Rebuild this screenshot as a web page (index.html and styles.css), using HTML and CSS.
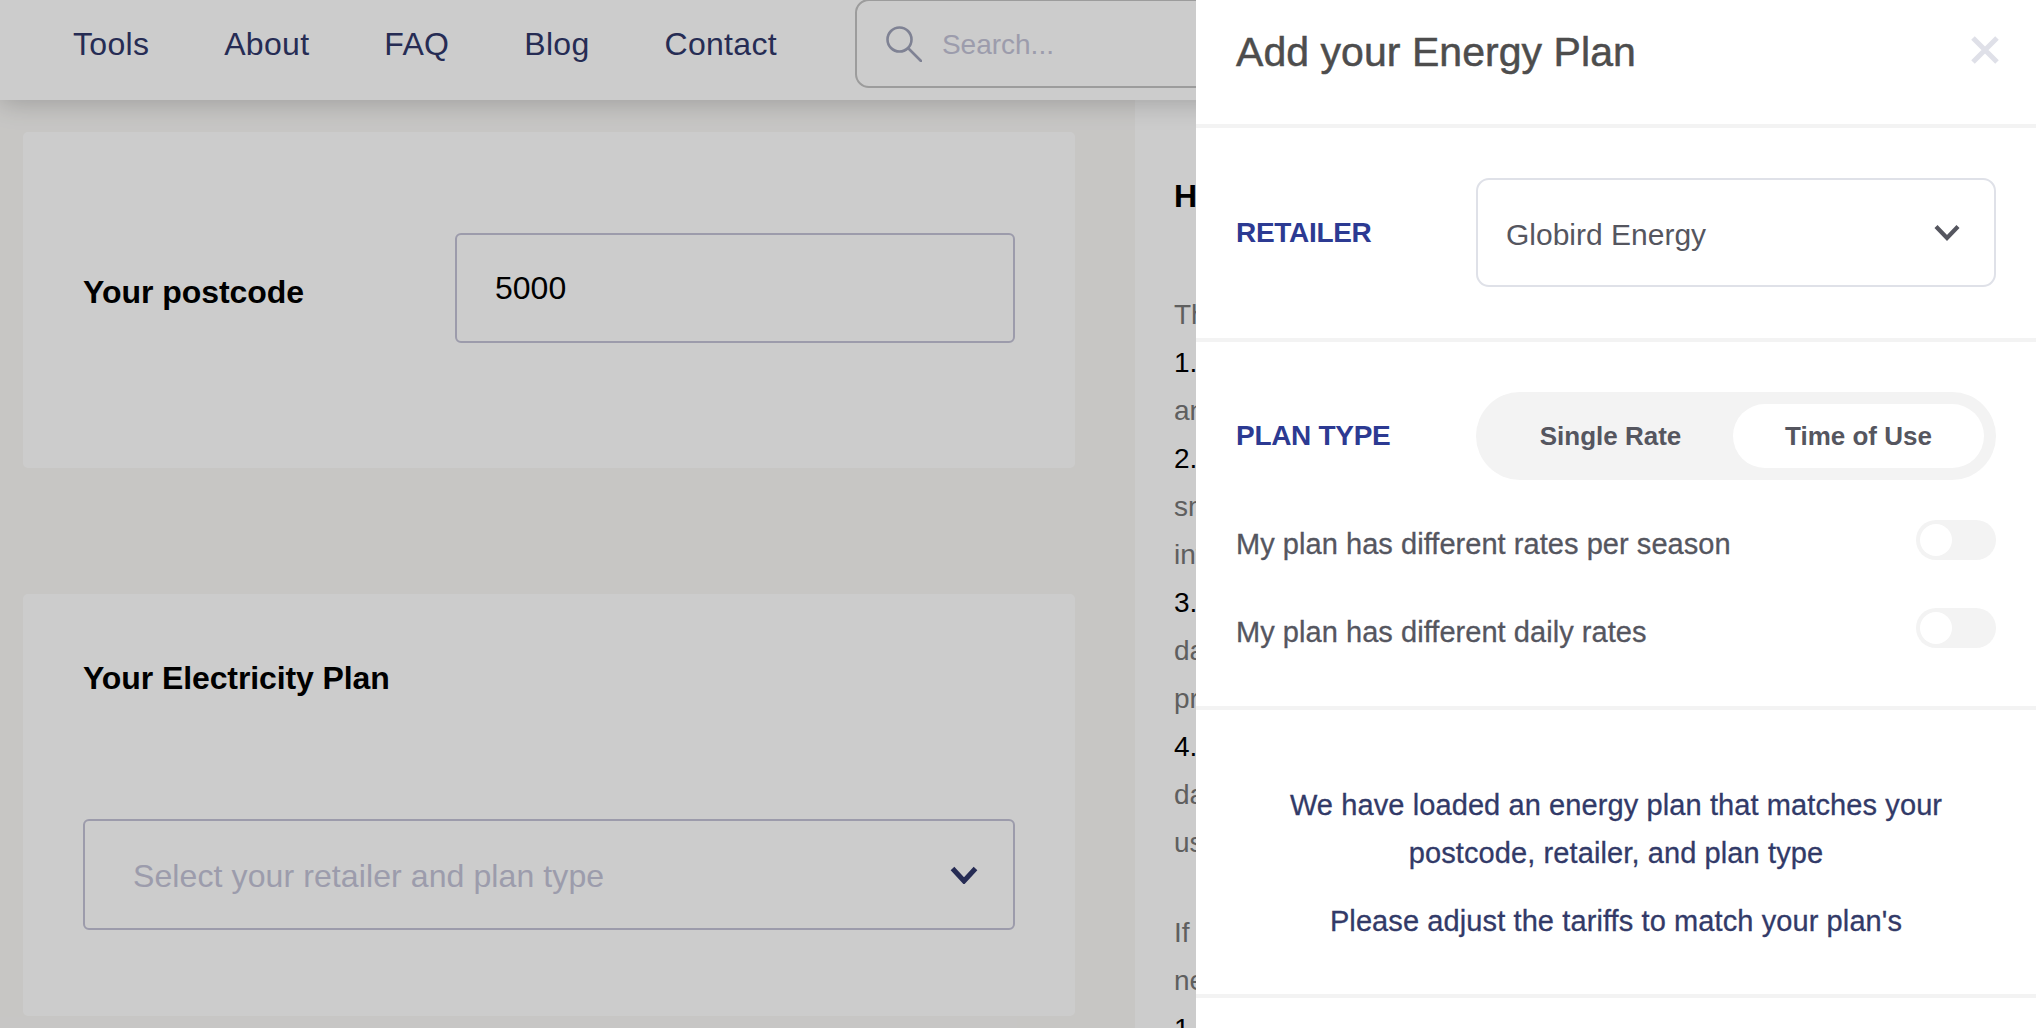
FILE: index.html
```html
<!DOCTYPE html>
<html lang="en">
<head>
<meta charset="utf-8">
<title>Add your Energy Plan</title>
<link rel="stylesheet" href="styles.css">
</head>
<body>
<div class="page">
  <header class="nav">
    <a class="nav-link">Tools</a>
    <a class="nav-link">About</a>
    <a class="nav-link">FAQ</a>
    <a class="nav-link">Blog</a>
    <a class="nav-link">Contact</a>
    <div class="search">
      <svg class="search-icon" viewBox="0 0 36 36" fill="none"><circle cx="13.5" cy="13.5" r="12" stroke="currentColor" stroke-width="2.6"/><path d="M22.5 22.5L35 35" stroke="currentColor" stroke-width="2.6" stroke-linecap="round"/></svg>
      <span class="search-text">Search...</span>
    </div>
  </header>
  <main class="main">
    <section class="left">
      <div class="card card-postcode">
        <div class="field-label">Your postcode</div>
        <div class="postcode-input">5000</div>
      </div>
      <div class="card card-plan">
        <h2 class="card-title">Your Electricity Plan</h2>
        <div class="plan-select">
          <span class="plan-placeholder">Select your retailer and plan type</span>
          <svg class="chevron chevron-navy" viewBox="0 0 28 18" fill="none"><path d="M2.5 2.5L14 15L25.5 2.5" stroke="currentColor" stroke-width="5"/></svg>
        </div>
      </div>
    </section>
    <aside class="right">
      <h3 class="help-title">How does this tool work?</h3>
      <div class="help-block">
        <div class="help-line">This tool compares your energy plan in four steps</div>
        <div class="help-line help-num">1. Enter your postcode</div>
        <div class="help-line">and select your retailer</div>
        <div class="help-line help-num">2. Add your plan</div>
        <div class="help-line">smart meter tariffs and</div>
        <div class="help-line">interval data</div>
        <div class="help-line help-num">3. Upload your data</div>
        <div class="help-line">daily usage and</div>
        <div class="help-line">pricing details</div>
        <div class="help-line help-num">4. Compare your results</div>
        <div class="help-line">daily costs and</div>
        <div class="help-line">usage patterns</div>
      </div>
      <div class="help-block">
        <div class="help-line">If you are unsure</div>
        <div class="help-line">need any help</div>
        <div class="help-line help-num">1. Check your bill</div>
      </div>
    </aside>
  </main>
  <div class="overlay"></div>
  <div class="panel">
    <div class="panel-head">
      <h1 class="panel-title">Add your Energy Plan</h1>
      <svg class="close" viewBox="0 0 28 28" fill="none"><path d="M2 2L26 26M26 2L2 26" stroke="currentColor" stroke-width="5"/></svg>
    </div>
    <div class="panel-section retailer-section">
      <div class="row">
        <div class="row-label">RETAILER</div>
        <div class="retailer-select">
          <span class="retailer-value">Globird Energy</span>
          <svg class="chevron chevron-grey" viewBox="0 0 26 18" fill="none"><path d="M2 2.5L13 14L24 2.5" stroke="currentColor" stroke-width="4.2"/></svg>
        </div>
      </div>
    </div>
    <div class="panel-section plan-section">
      <div class="row">
        <div class="row-label">PLAN TYPE</div>
        <div class="segmented">
          <div class="segment">Single Rate</div>
          <div class="segment segment-active">Time of Use</div>
        </div>
      </div>
      <div class="switch-row switch-first">
        <span class="switch-label">My plan has different rates per season</span>
        <span class="switch"><span class="knob"></span></span>
      </div>
      <div class="switch-row">
        <span class="switch-label">My plan has different daily rates</span>
        <span class="switch"><span class="knob"></span></span>
      </div>
    </div>
    <div class="panel-section message-section">
      <p class="message">We have loaded an energy plan that matches your<br>postcode, retailer, and plan type</p>
      <p class="message message-second">Please adjust the tariffs to match your plan's</p>
    </div>
  </div>
</div>
</body>
</html>
```
FILE: styles.css
```css
* { box-sizing: border-box; }
html, body { margin: 0; height: 100%; }
body { font-family: "Liberation Sans", Arial, sans-serif; overflow: hidden; }
.page { position: relative; width: 2036px; height: 1028px; overflow: hidden; background: #f9f8f6; }

.nav { position: relative; z-index: 2; display: flex; align-items: flex-start; gap: 75px; height: 100px; padding-left: 73px; background: #fff; box-shadow: 0 2px 26px rgba(0,0,0,.22); }
.nav-link { padding-top: 26px; font-size: 32px; line-height: 37px; letter-spacing: .3px; color: #30376a; }
.search { display: flex; align-items: center; gap: 20px; width: 600px; height: 89px; margin: -1px 0 0 3px; padding-left: 29px; border: 2px solid #c3c3c3; border-radius: 14px; }
.search-icon { width: 36px; height: 36px; color: #9fa3b9; }
.search-text { padding-top: 2px; font-size: 28px; color: #c4c4d7; }

.main { display: flex; height: 928px; }
.left { width: 1135px; padding: 32px 60px 0 23px; }
.card { background: #fff; border-radius: 5px; }
.card-postcode { display: flex; height: 336px; padding: 101px 60px 0 60px; margin-bottom: 126px; }
.field-label { width: 372px; padding-top: 41px; font-size: 32px; font-weight: 700; letter-spacing: -.05px; color: #000; }
.postcode-input { flex: 1; height: 110px; padding: 35px 38px; font-size: 32px; line-height: 37px; color: #000; border: 2px solid #c3c2d6; border-radius: 6px; }
.card-plan { height: 422px; padding: 66px 60px 0 60px; }
.card-title { margin: 0 0 122px; font-size: 32px; line-height: 37px; font-weight: 700; letter-spacing: -.1px; color: #000; }
.plan-select { display: flex; align-items: center; justify-content: space-between; height: 111px; padding: 0 35px 0 48px; border: 2px solid #c3c2d6; border-radius: 6px; }
.plan-placeholder { font-size: 32px; padding-top: 4px; letter-spacing: .1px; color: #c4c4d7; }
.chevron-navy { width: 28px; height: 18px; color: #30376a; }

.right { width: 901px; padding: 0 0 0 39px; background: #fff; }
.help-title { margin: 78px 0 76px; font-size: 32px; line-height: 37px; font-weight: 700; color: #000; white-space: nowrap; }
.help-block { margin-bottom: 42px; }
.help-line { font-size: 28px; line-height: 48px; color: #777; white-space: nowrap; }
.help-num { color: #000; }

.overlay { position: absolute; inset: 0; z-index: 3; background: rgba(0,0,0,.2); }

.panel { position: absolute; top: 0; right: 0; z-index: 4; width: 840px; height: 1028px; background: #fff; }
.panel-head { display: flex; align-items: center; justify-content: space-between; height: 128px; padding: 0 37px 20px 40px; border-bottom: 4px solid #f3f3f3; }
.panel-title { margin: 0; font-size: 41px; font-weight: 400; letter-spacing: .05px; color: #4d4d4d; -webkit-text-stroke: .5px #4d4d4d; }
.close { width: 28px; height: 28px; margin-top: -4px; color: #dfe0e8; }

.panel-section { padding: 0 40px; border-bottom: 4px solid #f3f3f3; }
.retailer-section { height: 214px; padding-top: 50px; }
.plan-section { height: 368px; padding-top: 50px; }
.message-section { height: 288px; padding-top: 71px; }

.row { display: flex; align-items: center; }
.row-label { width: 240px; font-size: 28px; font-weight: 700; letter-spacing: -.3px; color: #2c3a92; }
.retailer-select { flex: 1; display: flex; align-items: center; justify-content: space-between; height: 109px; padding: 0 34px 0 28px; border: 2px solid #dfe1e8; border-radius: 13px; }
.retailer-value { padding-top: 4px; font-size: 30px; color: #55565f; }
.chevron-grey { width: 26px; height: 18px; color: #55565f; }

.segmented { flex: 1; display: flex; align-items: center; height: 88px; padding: 12px; background: #f3f3f3; border-radius: 44px; }
.segment { flex: 1; display: flex; align-items: center; justify-content: center; height: 64px; font-size: 26px; font-weight: 700; color: #55565f; border-radius: 32px; }
.segment-active { flex: 0 0 251px; background: #fff; }

.switch-row { display: flex; justify-content: space-between; height: 40px; margin-top: 48px; }
.switch-first { margin-top: 40px; }
.switch-label { padding-top: 4px; font-size: 29px; line-height: 40px; letter-spacing: .05px; color: #55565f; -webkit-text-stroke: .3px #55565f; }
.switch { display: block; width: 80px; height: 40px; padding: 4px; background: #f3f3f3; border-radius: 20px; }
.knob { display: block; width: 32px; height: 32px; background: #fff; border-radius: 50%; }

.message { margin: 0; font-size: 29px; line-height: 48px; letter-spacing: .1px; text-align: center; color: #323a68; -webkit-text-stroke: .3px #323a68; }
.message-second { margin-top: 20px; }
```
